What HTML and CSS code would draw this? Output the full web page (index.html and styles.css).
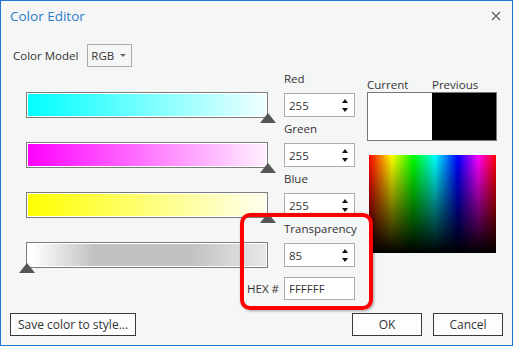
FILE: index.html
```html
<!DOCTYPE html>
<html lang="en">
<head>
    <meta charset="UTF-8">
    <title>Color Editor</title>
    <link rel="stylesheet" href="styles.css">
</head>
<body>
    <div class="dialog">
        <div class="titlebar">
            <span class="title">Color Editor</span>
            <span class="close">
                <svg width="10" height="10" viewBox="0 0 10 10"><path d="M1 1L9 9M9 1L1 9" stroke="#666" stroke-width="1.4"/></svg>
            </span>
        </div>

        <div class="model-row">
            <span>Color Model</span>
            <div class="dropdown">RGB <span class="caret"></span></div>
        </div>

        <div class="editor">
            <div class="channels">
                <div class="channel">
                    <div class="slider"><div class="bar bar-red"></div><span class="thumb thumb-end"></span></div>
                    <div class="field">
                        <label>Red</label>
                        <div class="spin"><span>255</span><span class="arrows"></span></div>
                    </div>
                </div>
                <div class="channel">
                    <div class="slider"><div class="bar bar-green"></div><span class="thumb thumb-end"></span></div>
                    <div class="field">
                        <label>Green</label>
                        <div class="spin"><span>255</span><span class="arrows"></span></div>
                    </div>
                </div>
                <div class="channel">
                    <div class="slider"><div class="bar bar-blue"></div><span class="thumb thumb-end"></span></div>
                    <div class="field">
                        <label>Blue</label>
                        <div class="spin"><span>255</span><span class="arrows"></span></div>
                    </div>
                </div>
                <div class="channel">
                    <div class="slider"><div class="bar bar-alpha"></div><span class="thumb thumb-start"></span></div>
                    <div class="field">
                        <label>Transparency</label>
                        <div class="spin"><span>85</span><span class="arrows"></span></div>
                    </div>
                </div>
                <div class="hex-row">
                    <label>HEX #</label>
                    <div class="hex-input">FFFFFF</div>
                </div>
            </div>

            <div class="preview">
                <div class="swatch-labels">
                    <span>Current</span>
                    <span>Previous</span>
                </div>
                <div class="swatches">
                    <div class="swatch swatch-current"></div>
                    <div class="swatch swatch-previous"></div>
                </div>
                <div class="spectrum"></div>
            </div>
        </div>

        <div class="footer">
            <button class="save">Save color to style...</button>
            <div class="footer-right">
                <button>OK</button>
                <button>Cancel</button>
            </div>
        </div>

        <div class="highlight"></div>
    </div>
</body>
</html>
```

FILE: styles.css
```css
body {
    margin: 0;
    font-family: "Segoe UI", "Open Sans", sans-serif;
    font-size: 11.5px;
    color: #333;
}
.dialog {
    position: relative;
    width: 513px;
    height: 346px;
    box-sizing: border-box;
    border: 1px solid #1e77cf;
    background-color: #f5f6f6;
}
.titlebar {
    height: 30px;
    display: flex;
    align-items: center;
    justify-content: space-between;
    padding: 0 11px 0 9px;
}
.title {
    font-size: 13.5px;
    color: #2d7ccb;
}
.close {
    display: flex;
}
.model-row {
    display: flex;
    align-items: center;
    gap: 9px;
    margin-top: 12px;
    padding-left: 12px;
    height: 24px;
}
.dropdown {
    display: flex;
    align-items: center;
    gap: 6px;
    height: 23px;
    box-sizing: border-box;
    padding: 0 5px 0 3px;
    border: 1px solid #acacac;
    background-color: #f5f6f6;
}
.caret {
    border-left: 3px solid transparent;
    border-right: 3px solid transparent;
    border-top: 3px solid #666;
}
.editor {
    display: flex;
    gap: 12px;
    padding-left: 25px;
}
.channel {
    display: grid;
    grid-template-columns: 242px 71px;
    column-gap: 16px;
    height: 50px;
    align-items: end;
}
.slider {
    position: relative;
    height: 26px;
    margin-bottom: -1px;
}
.bar {
    height: 100%;
    box-sizing: border-box;
    border: 1px solid #7d7d7d;
    box-shadow: inset 0 0 0 1px #fff;
}
.bar-red {
    background: linear-gradient(to right, #00ffff, #f0ffff);
}
.bar-green {
    background: linear-gradient(to right, #ff00ff, #fff0ff);
}
.bar-blue {
    background: linear-gradient(to right, #ffff00, #fffff0);
}
.bar-alpha {
    background: linear-gradient(to right, #ffffff 2%, #c2c2c2 28%, #c2c2c2 68%, #e8e8e8 100%);
}
.thumb {
    position: absolute;
    bottom: -5px;
    border-left: 8px solid transparent;
    border-right: 8px solid transparent;
    border-bottom: 10px solid #555;
}
.thumb-end {
    right: -8px;
}
.thumb-start {
    left: -7px;
}
.field label {
    display: block;
    line-height: 16px;
    margin-bottom: 6px;
}
.spin, .hex-input {
    display: flex;
    align-items: center;
    justify-content: space-between;
    height: 24px;
    box-sizing: border-box;
    padding: 0 5px 0 4px;
    border: 1px solid #acacac;
    background-color: #fff;
}
.arrows {
    position: relative;
    width: 7px;
    height: 14px;
}
.arrows::before, .arrows::after {
    content: "";
    position: absolute;
    left: 0;
    border-left: 3.5px solid transparent;
    border-right: 3.5px solid transparent;
}
.arrows::before {
    top: 1px;
    border-bottom: 4px solid #111;
}
.arrows::after {
    bottom: 0;
    border-top: 4px solid #111;
}
.hex-row {
    display: flex;
    justify-content: flex-end;
    align-items: center;
    gap: 5px;
    margin-top: 10px;
}
.hex-input {
    width: 71px;
    height: 23px;
}
.preview {
    width: 130px;
    padding-top: 11px;
}
.swatch-labels {
    display: flex;
    line-height: 14px;
}
.swatch-labels span {
    width: 66px;
}
.swatches {
    display: flex;
    height: 49px;
    box-sizing: border-box;
    border: 1px solid #777;
}
.swatch {
    flex: 1;
}
.swatch-current {
    background-color: #fff;
}
.swatch-previous {
    background-color: #000;
}
.spectrum {
    width: 127px;
    height: 98px;
    margin: 14px 0 0 2px;
    background:
        linear-gradient(to bottom, transparent, #000),
        linear-gradient(to right, #f00, #ff0 18%, #0f0 35%, #0ff 52%, #00f 70%, #f0f 86%, #f00);
}
.footer {
    display: flex;
    justify-content: space-between;
    margin-top: 13px;
    padding: 0 9px;
}
.footer-right {
    display: flex;
    gap: 11px;
}
button {
    height: 23px;
    width: 70px;
    font-family: inherit;
    font-size: 12px;
    color: #333;
    background-color: #fdfdfd;
    border: 1px solid #3a3a3a;
    padding: 0;
}
.save {
    width: 126px;
}
.highlight {
    position: absolute;
    left: 239px;
    top: 212px;
    width: 133px;
    height: 97px;
    box-sizing: border-box;
    border: 4px solid #f00;
    border-radius: 10px;
    box-shadow: 1px 1px 3px rgba(0,0,0,0.35);
}
```
